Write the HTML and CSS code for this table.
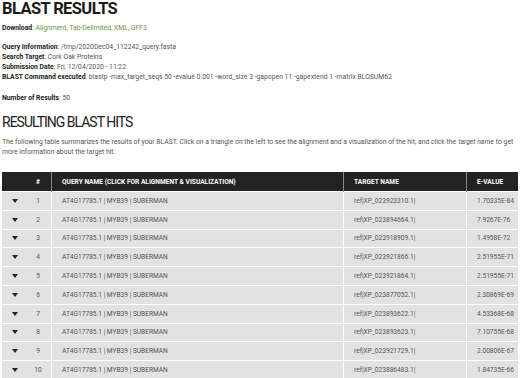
FILE: index.html
```html
<!DOCTYPE html>
<html>
<head>
<meta charset="utf-8">
<link rel="stylesheet" href="styles.css">
</head>
<body>
<div class="page">
  <h1 class="title">BLAST RESULTS</h1>
  <p class="line"><b>Download</b>: <span class="lnk">Alignment</span>, <span class="lnk">Tab-Delimited</span>, <span class="lnk">XML</span>, <span class="lnk">GFF3</span></p>
  <div class="info">
    <p class="line"><b>Query Information</b>: /tmp/2020Dec04_112242_query.fasta</p>
    <p class="line"><b>Search Target</b>: Cork Oak Proteins</p>
    <p class="line"><b>Submission Date</b>: Fri, 12/04/2020 - 11:22</p>
    <p class="line"><b>BLAST Command executed</b>: blastp -max_target_seqs 50 -evalue 0.001 -word_size 3 -gapopen 11 -gapextend 1 -matrix BLOSUM62</p>
  </div>
  <p class="line count"><b>Number of Results</b>: 50</p>
  <h2 class="sub">RESULTING BLAST HITS</h2>
  <p class="desc">The following table summarizes the results of your BLAST. Click on a triangle on the left to see the alignment and a visualization of the hit, and click the <i>target name</i> to get more information about the target hit.</p>
  <table class="hits">
    <thead>
      <tr><th class="c-tri"></th><th class="c-num">#</th><th class="c-q">QUERY NAME (CLICK FOR ALIGNMENT &amp; VISUALIZATION)</th><th class="c-t">TARGET NAME</th><th class="c-e">E-VALUE</th></tr>
    </thead>
    <tbody>
      <tr><td class="c-tri"><span class="tri"></span></td><td class="c-num">1</td><td class="c-q">AT4G17785.1 | MYB39 | SUBERMAN</td><td class="c-t">ref|XP_023923310.1|</td><td class="c-e">1.70335E-84</td></tr>
      <tr><td class="c-tri"><span class="tri"></span></td><td class="c-num">2</td><td class="c-q">AT4G17785.1 | MYB39 | SUBERMAN</td><td class="c-t">ref|XP_023894664.1|</td><td class="c-e">7.9267E-76</td></tr>
      <tr><td class="c-tri"><span class="tri"></span></td><td class="c-num">3</td><td class="c-q">AT4G17785.1 | MYB39 | SUBERMAN</td><td class="c-t">ref|XP_023918909.1|</td><td class="c-e">1.4958E-72</td></tr>
      <tr><td class="c-tri"><span class="tri"></span></td><td class="c-num">4</td><td class="c-q">AT4G17785.1 | MYB39 | SUBERMAN</td><td class="c-t">ref|XP_023921866.1|</td><td class="c-e">2.51955E-71</td></tr>
      <tr><td class="c-tri"><span class="tri"></span></td><td class="c-num">5</td><td class="c-q">AT4G17785.1 | MYB39 | SUBERMAN</td><td class="c-t">ref|XP_023921864.1|</td><td class="c-e">2.51955E-71</td></tr>
      <tr><td class="c-tri"><span class="tri"></span></td><td class="c-num">6</td><td class="c-q">AT4G17785.1 | MYB39 | SUBERMAN</td><td class="c-t">ref|XP_023877052.1|</td><td class="c-e">2.30869E-69</td></tr>
      <tr><td class="c-tri"><span class="tri"></span></td><td class="c-num">7</td><td class="c-q">AT4G17785.1 | MYB39 | SUBERMAN</td><td class="c-t">ref|XP_023893622.1|</td><td class="c-e">4.53368E-68</td></tr>
      <tr><td class="c-tri"><span class="tri"></span></td><td class="c-num">8</td><td class="c-q">AT4G17785.1 | MYB39 | SUBERMAN</td><td class="c-t">ref|XP_023893623.1|</td><td class="c-e">7.10755E-68</td></tr>
      <tr><td class="c-tri"><span class="tri"></span></td><td class="c-num">9</td><td class="c-q">AT4G17785.1 | MYB39 | SUBERMAN</td><td class="c-t">ref|XP_023921729.1|</td><td class="c-e">2.00806E-67</td></tr>
      <tr><td class="c-tri"><span class="tri"></span></td><td class="c-num">10</td><td class="c-q">AT4G17785.1 | MYB39 | SUBERMAN</td><td class="c-t">ref|XP_023886483.1|</td><td class="c-e">1.84735E-66</td></tr>
    </tbody>
  </table>
</div>
</body>
</html>
```

FILE: styles.css
```css
html, body {
  margin: 0;
  padding: 0;
  background: #fff;
}
.page {
  padding: 0 2px;
  font-family: Roboto, "Liberation Sans", sans-serif;
  color: #444;
}
.title {
  margin: 0;
  font-size: 16.5px;
  line-height: 17px;
  letter-spacing: -0.6px;
  font-weight: 700;
  color: #1a1a1a;
}
.line {
  margin: 0;
  font-size: 6.8px;
  line-height: 10px;
  color: #555;
}
.line b {
  color: #222;
  font-weight: 700;
}
.lnk {
  color: #6a9440;
}
.title + .line {
  margin-top: 6px;
}
.info {
  margin-top: 9px;
}
.count {
  margin-top: 11px;
}
.sub {
  margin: 9px 0 0;
  font-size: 14px;
  line-height: 20px;
  letter-spacing: -1px;
  font-weight: 400;
  color: #222;
}
.desc {
  margin: 5px 0 0;
  font-size: 6.8px;
  line-height: 10px;
  color: #555;
}
.desc i {
  padding: 0 0.5px;
}
.hits {
  margin-top: 15px;
  width: 516px;
  border-collapse: collapse;
  font-size: 6.6px;
}
.hits th {
  background: #232323;
  color: #fff;
  font-weight: 700;
  text-align: left;
  height: 19px;
  padding: 0 0 0 10px;
  border-left: 1px solid #888;
}
.hits th.c-tri {
  border-left: 0;
}
.hits th.c-num {
  border-left: 0;
  text-align: center;
  padding: 0;
}
.hits td {
  background: #e2e2e2;
  color: #555;
  height: 17.8px;
  padding: 0 0 0 10px;
  border-top: 1px solid #fff;
  border-left: 1px solid #fff;
}
.hits td.c-tri {
  border-left: 0;
  padding: 0 0 0 10px;
}
.hits td.c-num {
  border-left: 0;
  text-align: center;
  padding: 0;
}
.c-tri { width: 13px; }
.c-num { width: 26px; }
.c-q { width: 281px; }
.c-t { width: 112px; }
.tri {
  display: block;
  width: 0;
  height: 0;
  border-left: 3.5px solid transparent;
  border-right: 3.5px solid transparent;
  border-top: 4px solid #222;
}
```
